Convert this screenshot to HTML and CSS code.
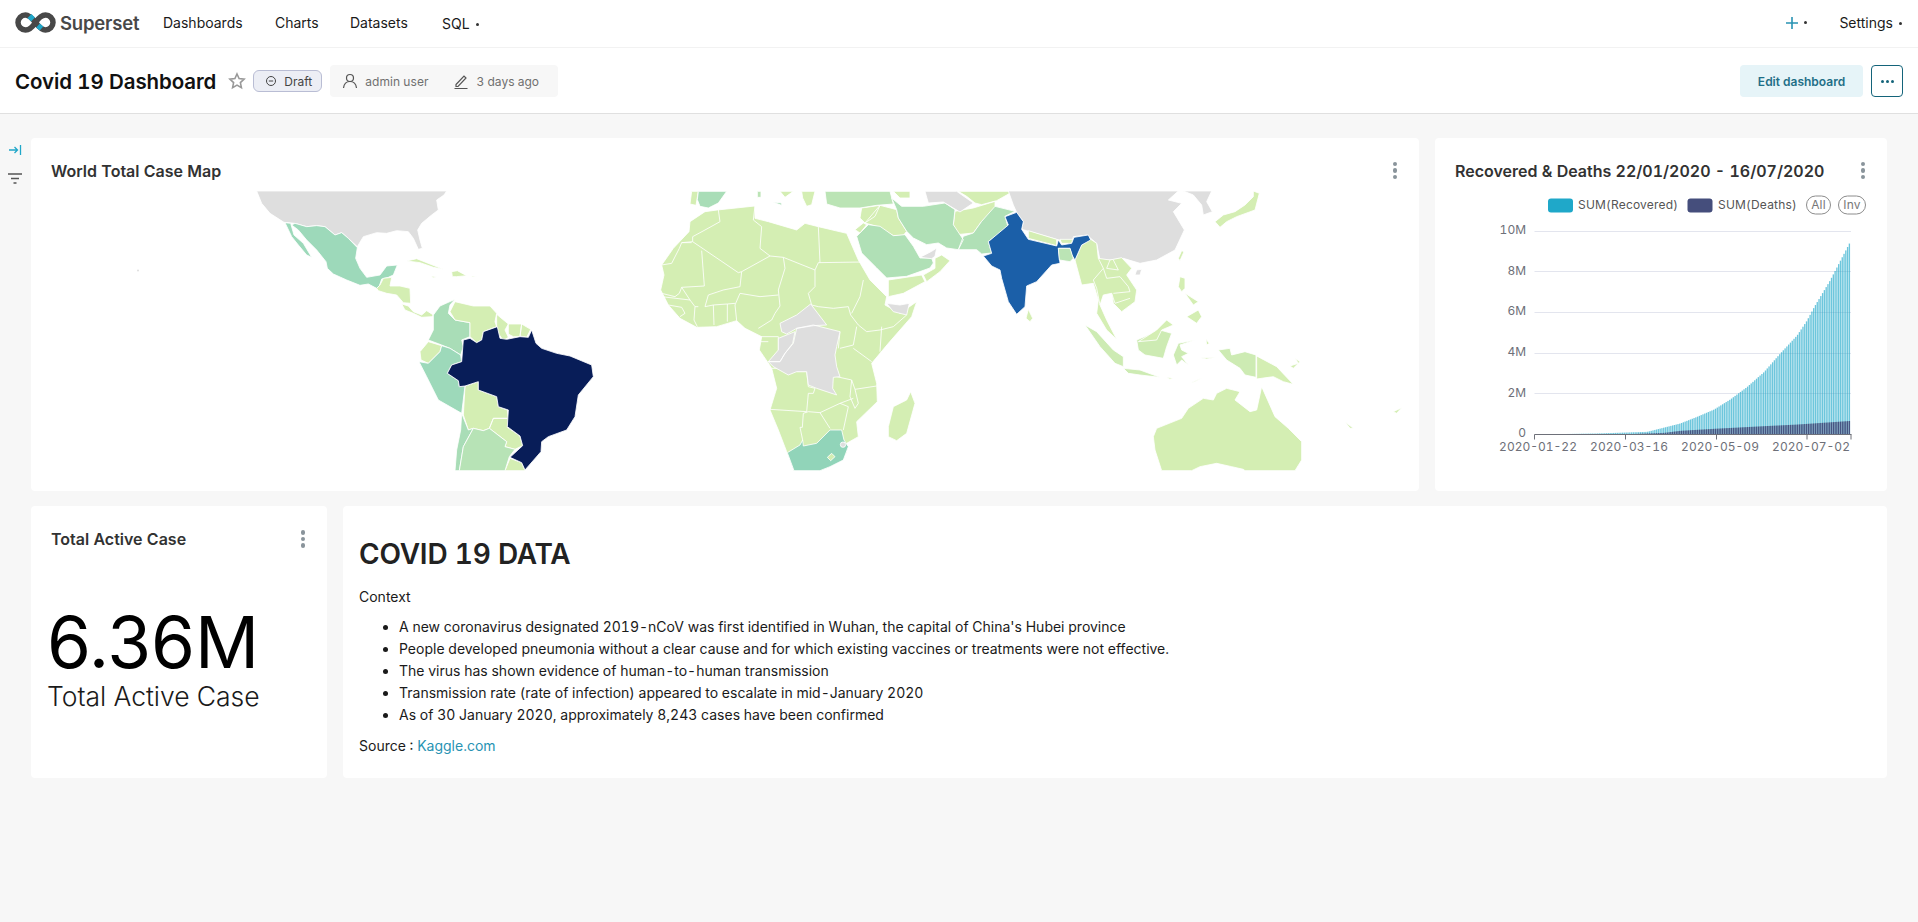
FILE: index.html
```html
<!DOCTYPE html>
<html lang="en">
<head>
<meta charset="utf-8">
<title>Covid 19 Dashboard</title>
<link rel="stylesheet" href="styles.css">
</head>
<body>
<nav class="nav">
  <div class="brand">
    <svg class="logo" viewBox="0 0 41 21" width="41" height="21">
      <path class="logo-grey" d="M20.500 10.500C17 6 14 3 10.500 3a7.500 7.500 0 0 0 0 15c3.500 0 7-3 10-7.500s6.500-7.500 10-7.500a7.500 7.500 0 0 1 0 15c-3.500 0-6.500-3-10-7.500"/>
      <path class="logo-blue" d="M14.500 4L18 7.500M23 13.500L26.500 16.500"/>
    </svg>
    <span class="brand-name">Superset</span>
  </div>
  <ul class="menu">
    <li class="m-dash">Dashboards</li>
    <li class="m-charts">Charts</li>
    <li class="m-data">Datasets</li>
    <li class="m-sql">SQL<i class="caret"></i></li>
  </ul>
  <div class="nav-right">
    <span class="plus"><svg viewBox="0 0 14 14" width="14" height="14"><path d="M7 1v12M1 7h12"/></svg><i class="caret"></i></span>
    <span class="settings">Settings<i class="caret"></i></span>
  </div>
</nav>
<header class="subhead">
  <h1 class="dash-title">Covid 19 Dashboard</h1>
  <svg class="star" viewBox="0 0 18 18" width="18" height="18"><path d="M9 2l2.100 4.600 5 .6-3.700 3.400 1 5L9 13.100 4.600 15.600l1-5L1.900 7.200l5-.6z"/></svg>
  <span class="tag"><svg viewBox="0 0 12 12" width="12" height="12"><circle cx="6" cy="6" r="4.500"/><path d="M3.800 6h4.400"/></svg>Draft</span>
  <div class="meta">
    <svg class="meta-user" viewBox="0 0 16 16" width="16" height="16"><circle cx="8" cy="5" r="3.500"/><path d="M1.500 15c.5-4 3-6.500 6.500-6.500s6 2.500 6.500 6.500"/></svg>
    <span class="meta-name">admin user</span>
    <svg class="meta-edit" viewBox="0 0 16 16" width="16" height="16"><path d="M3 11.500L11 3l2 2-8 8.500H3zM1.500 15.500h13"/></svg>
    <span class="meta-time">3 days ago</span>
  </div>
  <div class="actions">
    <button class="edit-btn">Edit dashboard</button>
    <button class="more-btn"><i></i><i></i><i></i></button>
  </div>
</header>
<div class="page">
  <aside class="rail">
    <svg class="rail-expand" viewBox="0 0 14 14" width="14" height="14"><path d="M1 7h8M6.500 4l3 3-3 3M12.500 2v10"/></svg>
    <svg class="rail-filter" viewBox="0 0 14 12" width="14" height="12"><path d="M0 1h14M3 5.500h8M5.500 10h3"/></svg>
  </aside>
  <main class="grid">
    <div class="row row-top">
      <section class="card card-map">
        <div class="card-head"><h2>World Total Case Map</h2><span class="kebab"><i></i><i></i><i></i></span></div>
        <svg class="map" viewBox="31 191 1388 280" width="1388" height="280">
          <circle class="grey" cx="138" cy="270.500" r="1"/>
          <g transform="translate(220 180) scale(.33333)" class="land">
            <path class="grey" d="M110 33L680 33 672 45 650 60 655 90 635 105 605 130 593 150 600 180 607 205 595 208 580 175 565 155 530 152 500 160 470 158 430 170 412 200 385 175 365 158 345 165 315 140 290 137 260 140 225 130 192 127 150 100 125 70Z"/>
            <path class="c-mex" d="M215 135L225 130 260 140 290 137 315 140 345 165 365 158 385 175 412 203 407 235 420 265 440 292 480 285 500 258 532 255 520 285 505 292 485 297 478 318 470 325 445 312 420 316 380 300 340 282 322 265 318 245 290 210 260 180 235 150ZM195 128L212 130 222 165 250 190 275 232 260 225 235 195 215 170Z"/>
            <path class="lt" d="M470 325L480 315 490 295 515 292 510 318 540 318 570 325 572 370 550 368 530 345 500 340 475 332ZM545 372L565 378 580 395 605 405 620 392 640 405 635 410 605 412 580 400 555 390ZM560 243L590 236 630 252 670 268 640 262 600 248ZM695 275L712 272 740 287 710 290 697 290ZM632 288L650 290 640 293ZM755 288L772 289 757 291Z"/>
            <path class="c-col" d="M705 358L690 375 685 400 705 420 750 428 750 470 725 480 730 500 722 525 690 505 665 495 625 480 640 450 640 405 660 378Z"/>
            <path class="lt" d="M705 365L760 378 810 378 830 400 825 425 830 440 790 455 785 480 770 488 750 470 750 428 705 420 690 395ZM830 403L865 432 855 450 865 472 850 482 835 460 830 440ZM865 432L905 432 900 470 880 470 865 462ZM905 432L932 448 920 472 900 468ZM625 485L665 497 660 515 625 550 603 540 600 515ZM735 618L775 605 775 630 830 650 835 680 862 690 865 715 820 715 808 745 790 752 760 745 745 750 730 705ZM820 715L865 715 862 742 900 768 908 797 885 808 855 800 860 785 808 745ZM870 835L905 848 915 872 855 872Z"/>
            <path class="c-mex" d="M665 497L690 505 722 525 725 545 695 555 682 580 715 602 718 620 735 618 725 700 655 660 620 590 597 545 625 550 660 515Z"/>
            <path class="c-col" d="M725 700L745 750 760 745 730 800 718 872 705 872 710 810 722 750Z"/>
            <path class="c-arg" d="M760 745L790 752 808 745 860 785 855 800 885 808 868 830 855 872 718 872 730 800Z"/>
            <path class="c-bra" d="M832 440L840 475 860 478 900 470 925 472 935 450 948 490 965 505 1010 520 1050 528 1115 555 1120 590 1075 645 1065 710 1040 750 985 770 965 785 963 815 915 870 905 848 870 832 908 797 900 768 862 740 865 690 835 680 830 650 775 630 775 605 735 618 718 620 715 602 682 580 695 555 725 545 730 480 750 475 770 488 785 480 790 455Z"/>
          </g>
          <g transform="translate(640 180) scale(.33333)" class="land">
            <path class="lt" d="M232 90L345 78 345 115 385 125 470 150 495 130 535 140 620 160 655 240 690 300 740 350 735 375 780 400 830 365 815 410 745 490 695 550 710 610 712 665 650 725 655 770 620 790 620 820 570 860 540 872 462 872 440 815 415 750 390 690 410 625 395 565 382 545 358 510 365 470 315 445 290 422 230 440 170 442 120 415 85 375 62 330 72 285 65 255 100 205 147 155 150 125 195 95Z"/>
            <path class="borders" d="M235 90L240 125 195 150 158 170 158 185 125 188 118 205 95 250 65 255M125 188L155 188M158 185L295 278 305 275 390 228 430 232 525 270 535 248 670 246M185 212L193 318 125 322 118 340 105 350 65 340M345 78L340 120 365 140 360 205 390 228M535 140L540 248M430 232L435 265 415 330 420 378 405 400 395 420 355 445M525 270L525 320 505 340 515 375 535 380 580 385 625 380 632 405 655 435 680 455 720 450 760 440 800 405M670 300L660 350 635 400M415 345L360 350 300 340 285 375 290 422M305 275L300 320 250 330 205 345 195 380 220 375 262 372 285 370M220 375L222 435M262 372L262 425M175 380L165 380 162 420 172 440M125 322L150 360 165 380M65 350L150 360M85 375L125 382 135 400 120 410M725 440L720 515M650 440L640 495 600 505M640 505L695 545M600 455L595 505M590 590L635 600 645 628 710 618M635 600L630 650 645 685 655 670 645 628M395 565L445 565 470 575 500 575 505 620 525 625 520 640 505 640 500 695 390 688M505 695L490 700 487 742 480 742 488 780M505 695L540 698 600 670 625 680 610 750M540 698L570 745M600 670L640 655M360 470L415 470 415 510M360 485L385 485"/>
            <path class="lt" d="M812 635L825 670 800 760 770 782 745 770 745 740 760 680 800 660Z"/>
            <path class="grey" d="M470 445L520 435 600 455 590 500 585 525 590 560 600 590 580 592 578 625 590 645 530 625 505 615 500 575 470 575 445 585 400 560 385 545 420 545 435 520 460 490ZM420 430L470 405 512 372 560 435 520 437 470 445 440 462 425 455ZM415 475L465 455 458 490 435 520 420 545 385 545 415 510ZM740 370L780 375 808 370 800 405 760 395Z"/>
            <path class="c-zaf" d="M442 818L480 795 488 780 490 798 530 790 570 750 605 750 612 780 625 800 610 840 570 860 540 872 462 872Z"/>
            <path class="lt" d="M562 832L575 820 585 830 572 842Z"/>
            <circle class="grey" cx="609" cy="794" r="8"/>
            <path class="lt" d="M745 300L845 285 855 305 790 340 745 350ZM850 285L885 265 885 235 905 225 930 242 900 275 860 305Z"/>
          </g>
          <g transform="translate(680 188) scale(.33333)" class="land">
            <path class="lt" d="M35 10L55 10 48 52 30 48ZM365 10L405 10 395 50 380 55 368 30ZM300 10L340 10 315 28ZM640 10L690 10 690 30 660 30ZM555 105L600 52 650 65 655 90 680 130 670 142 640 143 590 115ZM545 60L600 52 585 85 555 105 540 90ZM525 125L550 105 560 110 540 135ZM835 10L1000 10 950 38 905 50 885 45 860 25ZM825 70L880 60 945 40 945 60 905 100 880 135 830 140 820 110Z"/>
            <path class="c-col" d="M55 10L140 10 115 45 85 60 60 55 52 35ZM278 42L305 45 305 52Z"/>
            <path class="c-tur" d="M435 10L630 10 640 48 590 52 540 60 480 60 440 48ZM232 10L243 10 243 28 232 28Z"/>
            <path class="c-sau" d="M530 145L565 110 600 115 640 143 675 140 700 175 720 210 755 210 760 225 750 240 680 265 620 270 590 240 545 195ZM635 30L665 55 730 55 795 45 825 65 820 110 850 155 835 185 800 180 775 165 740 170 700 150 680 130 655 90 650 65ZM850 145L880 135 905 100 945 55 1005 70 975 85 985 120 925 160 935 195 905 198 890 185 835 185Z"/>
            <path class="grey" d="M735 10L830 10 880 45 840 72 820 60 790 42 745 45ZM720 208L755 190 770 180 765 205 755 212Z"/>
          </g>
          <g transform="translate(1000 180) scale(.33333)" class="land">
            <path class="grey" d="M25 33L535 33 505 60 545 70 520 95 553 150 525 210 470 240 420 250 370 235 330 240 300 240 290 190 272 175 262 165 220 170 215 190 170 178 80 152 65 148 70 125 50 97 40 75ZM550 33L635 33 620 65 637 95 610 105 605 75 580 45ZM410 270L425 268 420 285 405 285Z"/>
            <path class="lt" d="M85 152L170 178 170 197 85 175ZM180 178L218 178 215 190 185 190ZM225 240L245 195 272 178 290 190 295 235 330 240 365 233 395 265 380 285 410 330 405 365 365 395 340 370 335 340 310 345 300 375 320 420 350 478 320 450 290 400 295 360 280 310 245 315ZM85 388L98 415 90 425 78 415Z"/>
            <path class="borders" d="M295 235L310 265 280 300 290 325 300 375M310 265L320 295 360 290 385 320 390 335 340 340M330 240L320 265 355 270 340 240M335 340L345 370 390 355"/>
            <path class="c-ind" d="M50 97L70 125 65 148 85 178 170 198 175 180 185 195 215 190 222 172 265 165 272 180 245 195 225 240 215 225 210 205 175 205 180 250 155 255 110 305 80 318 75 380 50 403 25 365 5 295 0 270-25 258-50 228-25 220-35 185 25 135 15 110Z"/>
            <path class="c-tur" d="M175 205L210 205 220 235 210 245 178 240Z"/>
            <path class="lt2" d="M255 435L290 455 340 510 370 530 370 560 345 550 300 500ZM370 565L420 570 480 592 420 585 385 580ZM410 480L480 450 515 460 500 500 490 535 435 525 415 510ZM535 490L585 480 540 495 545 510 565 520 545 530 565 555 545 540 530 555 520 525ZM655 510L690 505 695 525 735 515 768 525 768 592 735 585 720 565 680 540Z"/>
            <path class="lt" d="M415 485L470 450 500 420 520 435 485 450 470 480ZM540 290L555 295 555 325 545 335 535 320ZM555 340L595 365 580 375ZM560 410L595 390 605 410 590 430ZM545 212L552 215 540 242 535 235ZM760 33L778 40 765 90 710 110 680 125 660 142 645 125 670 105 705 95 735 75 760 50ZM770 528L830 560 880 613 850 605 820 590 770 597ZM460 770L470 745 545 715 565 685 610 655 640 660 650 640 680 625 720 635 705 660 750 695 770 690 785 620 825 710 865 745 905 785 905 840 885 872 735 872 730 868 695 860 650 850 600 860 575 872 485 872 465 810ZM870 558L895 550 885 535 900 545 880 565ZM1035 725L1060 745 1050 745ZM1180 695L1205 683 1190 700ZM498 592L520 595 510 598ZM572 608L610 592 585 605ZM600 533L650 532 620 537ZM618 478L628 490 620 495Z"/>
          </g>
        </svg>
      </section>
      <section class="card card-chart">
        <div class="card-head"><h2>Recovered &amp; Deaths 22/01/2020 - 16/07/2020</h2><span class="kebab"><i></i><i></i><i></i></span></div>
        <svg id="bars" class="chart" viewBox="1435 191 452 280" width="452" height="280">
          <rect class="sw-a" x="1548" y="198.500" width="25" height="14" rx="3"/>
          <text class="lg" x="1578" y="208.500">SUM(Recovered)</text>
          <rect class="sw-b" x="1687.500" y="198.500" width="25" height="14" rx="3"/>
          <text class="lg" x="1718" y="208.500">SUM(Deaths)</text>
          <rect class="pill" x="1806.500" y="196" width="24" height="18" rx="9"/>
          <text class="lg pill-t" x="1818.500" y="209">All</text>
          <rect class="pill" x="1838.500" y="196" width="27" height="18" rx="9"/>
          <text class="lg pill-t" x="1852" y="209">Inv</text>
          <path class="gridline" d="M1534.500 231.500H1851M1534.500 271.500H1851M1534.500 312.500H1851M1534.500 353.500H1851M1534.500 393.500H1851"/>
          <g class="ylab">
            <text x="1526" y="234">10M</text><text x="1526" y="275">8M</text><text x="1526" y="315">6M</text><text x="1526" y="356">4M</text><text x="1526" y="397">2M</text><text x="1526" y="437">0</text>
          </g>
          <g id="series"></g>
          <path class="axis" d="M1534.500 434.500H1851.500M1534.500 434.500v5M1625.500 434.500v5M1716.500 434.500v5M1807 434.500v5M1851 434.500v5"/>
          <g class="xlab">
            <text x="1538" y="451">2020-01-22</text><text x="1629" y="451">2020-03-16</text><text x="1720" y="451">2020-05-09</text><text x="1811" y="451">2020-07-02</text>
          </g>
        </svg>
      </section>
    </div>
    <div class="row row-bottom">
      <section class="card card-num">
        <div class="card-head"><h2>Total Active Case</h2><span class="kebab"><i></i><i></i><i></i></span></div>
        <div class="big">6.36M</div>
        <div class="big-sub">Total Active Case</div>
      </section>
      <section class="card card-md">
        <h1>COVID 19 DATA</h1>
        <p>Context</p>
        <ul>
          <li>A new coronavirus designated 2019-nCoV was first identified in Wuhan, the capital of China's Hubei province</li>
          <li>People developed pneumonia without a clear cause and for which existing vaccines or treatments were not effective.</li>
          <li>The virus has shown evidence of human-to-human transmission</li>
          <li>Transmission rate (rate of infection) appeared to escalate in mid-January 2020</li>
          <li>As of 30 January 2020, approximately 8,243 cases have been confirmed</li>
        </ul>
        <p>Source : <a href="#">Kaggle.com</a></p>
      </section>
    </div>
  </main>
</div>
<script src="chart.js"></script>
</body>
</html>
```
FILE: styles.css
```css
* { box-sizing: border-box; }
html, body { margin: 0; height: 100%; }
body { background: #f7f7f7; font-family: Inter, "Liberation Sans", sans-serif; color: #1a1a1a; font-size: 14px; overflow: hidden; font-variant-numeric: tabular-nums; }

.nav { height: 48px; background: #fff; display: flex; align-items: center; padding: 0 0 2px 15px; border-bottom: 1px solid #f2f2f2; }
.brand { display: flex; align-items: center; gap: 4px; width: 148px; }
.logo { fill: none; }
.logo-grey { fill: none; stroke: #484848; stroke-width: 5.500; }
.logo-blue { fill: none; stroke: #20a7c9; stroke-width: 5.500; }
.brand-name { font-size: 18.500px; font-weight: 600; color: #484848; letter-spacing: -.2px; }
.menu { list-style: none; margin: 0; padding: 0; display: flex; }
.menu li { line-height: 20px; }
.m-dash { width: 112px; }
.m-charts { width: 75px; }
.m-data { width: 92px; }
.m-sql { position: relative; top: 1px; }
.caret { display: inline-block; width: 3px; height: 3px; border-radius: 50%; background: #333; margin-left: 6px; vertical-align: 3px; }
.nav-right { margin-left: auto; display: flex; align-items: center; padding-right: 16px; }
.plus { display: flex; align-items: center; margin-right: 32px; }
.plus svg path { fill: none; stroke: #2893b3; stroke-width: 1.600; }
.plus .caret { margin-left: 5px; vertical-align: 0; }
.settings { line-height: 20px; }

.subhead { height: 66px; background: #fff; display: flex; align-items: center; padding: 1px 15px 0; border-bottom: 1px solid #e0e0e0; }
.dash-title { margin: 2px 0 0; font-size: 20.500px; font-weight: 600; color: #111; line-height: 28px; white-space: nowrap; letter-spacing: -.1px; }
.star { margin-left: 12px; fill: none; stroke: #999; stroke-width: 1.600; }
.tag { display: flex; align-items: center; gap: 7px; margin-left: 7px; height: 22px; width: 69px; padding-left: 11px; border: 1px solid #b9bdd4; border-radius: 6px; background: #eceef5; font-size: 12px; color: #444; }
.tag svg { fill: none; stroke: #444; stroke-width: 1; }
.meta { display: flex; align-items: center; margin-left: 8px; height: 32px; width: 228px; padding-left: 12px; background: #f7f7f7; border-radius: 4px; font-size: 12px; color: #707070; }
.meta svg { fill: none; stroke: #555; stroke-width: 1.200; flex: none; }
.meta span { white-space: nowrap; }
.meta-name { margin: 0 24px 0 7px; letter-spacing: .05px; }
.meta-time { margin-left: 8px; }
.actions { margin-left: auto; display: flex; gap: 8px; }
.edit-btn { height: 32px; width: 123px; border: 0; border-radius: 4px; background: #e6f4f8; color: #1f6f87; font: 600 12px Inter, sans-serif; }
.more-btn { height: 32px; width: 32px; background: #fff; border: 1px solid #14647a; border-radius: 4px; display: flex; align-items: center; justify-content: center; gap: 2px; padding: 0; }
.more-btn i { width: 3px; height: 3px; border-radius: 50%; background: #14647a; }

.page { display: flex; padding-top: 24px; }
.rail { width: 31px; flex: none; display: flex; flex-direction: column; align-items: center; padding-top: 5px; gap: 16px; }
.rail svg { fill: none; stroke-width: 1.300; }
.rail-expand { stroke: #20a7c9; margin-left: -2px; }
.rail-filter { stroke: #555; margin-left: -1px; }
.grid { display: flex; flex-direction: column; gap: 15px; width: 1856px; }
.row { display: flex; gap: 16px; }
.card { background: #fff; border-radius: 4px; overflow: hidden; }
.row-top .card { height: 353px; }
.row-bottom .card { height: 272px; }
.card-map { width: 1388px; }
.card-chart { width: 452px; flex: none; }
.card-num { width: 296px; flex: none; }
.card-md { flex: 1; padding: 25px 16px 0 16px; }
.card-head { display: flex; justify-content: space-between; align-items: center; height: 53px; padding: 25px 22px 13px 20px; }
.card-head h2 { margin: 0; font-size: 16px; font-weight: 600; color: #323232; white-space: nowrap; }
.card-num .card-head { height: 50px; padding: 26px 22px 10px 20px; }
.kebab { display: flex; flex-direction: column; gap: 2px; }
.kebab i { width: 4.500px; height: 4.500px; border-radius: 50%; background: #8a949b; }
.map, .chart { display: block; }

.land { stroke: #fff; stroke-width: 2.500; stroke-linejoin: round; }
.grey { fill: #dedede; }
.lt { fill: #d4eeb3; }
.lt2 { fill: #cdebb3; }
.c-mex { fill: #9dd9ba; }
.c-col { fill: #a9ddb7; }
.c-arg { fill: #b7e3b6; }
.c-bra { fill: #081d58; }
.c-tur { fill: #bbe4b5; }
.c-sau { fill: #b0e0b6; }
.c-zaf { fill: #91d4b9; }
.c-ind { fill: #1b5fa8; }
.borders { fill: none; stroke: #fff; stroke-width: 2.500; }

.chart text { font-family: Inter, sans-serif; }
.lg { font-size: 12px; fill: #555; letter-spacing: .2px; }
.pill { fill: #fff; stroke: #8c8c8c; }
.pill-t { text-anchor: middle; fill: #777; }
.sw-a { fill: #1fa8c9; }
.sw-b { fill: #454e7c; }
.gridline { fill: none; stroke: #e3e5ee; }
.axis { fill: none; stroke: #6e7079; }
.ylab text { font-size: 12px; fill: #6e7079; text-anchor: end; }
.xlab text { font-size: 12px; fill: #6e7079; text-anchor: middle; }
.bar-a { fill: #1fa8c9; fill-opacity: .65; }
.bar-b { fill: #454e7c; fill-opacity: .95; }

.big { font-size: 71px; line-height: 72px; margin: 50px 0 0 16px; color: #000; white-space: nowrap; font-weight: 400; font-variant-numeric: normal; }
.big-sub { font-size: 26.500px; line-height: 32px; margin: 2px 0 0 16px; color: #1a1a1a; font-weight: 300; white-space: nowrap; }

.card-md h1 { margin: 0 0 9px; font-size: 28px; line-height: 46px; font-weight: 600; color: #222; letter-spacing: -.2px; }
.card-md p { margin: 0; line-height: 22px; }
.card-md ul { margin: 8px 0 9px; padding-left: 40px; }
.card-md li { line-height: 22px; }
.card-md a { color: #2893b3; text-decoration: none; }
```
FILE: chart.js
```js
// Daily bars for the Recovered & Deaths chart, interpolated from the series' key points.
(function () {
  var NS = 'http://www.w3.org/2000/svg';
  var group = document.getElementById('series');
  var recovered = [[0, 0], [62, .05], [112, .13], [129, .34], [145, .54], [162, .87], [179, 1.23], [195, 1.72],
    [212, 2.34], [229, 3.08], [245, 3.98], [262, 4.88], [272, 5.62], [279, 6.27], [295, 7.59], [315, 9.48]];
  var deaths = [[0, 0], [95, .02], [129, .08], [145, .18], [179, .28], [229, .41], [262, .49], [316, .67]];
  function at(points, x) {
    for (var i = 1; i < points.length; i++) {
      if (x <= points[i][0]) {
        var a = points[i - 1], b = points[i];
        return a[1] + (b[1] - a[1]) * (x - a[0]) / (b[0] - a[0]);
      }
    }
    return points[points.length - 1][1];
  }
  function bar(cls, x, value) {
    var h = value * 20.3;
    var r = document.createElementNS(NS, 'rect');
    r.setAttribute('class', cls);
    r.setAttribute('x', (1534.5 + x).toFixed(2));
    r.setAttribute('y', (434.5 - h).toFixed(2));
    r.setAttribute('width', '1.35');
    r.setAttribute('height', h.toFixed(2));
    group.appendChild(r);
  }
  var step = 316 / 177;
  for (var i = 0; i < 177; i++) {
    var x = i * step;
    bar('bar-a', x, at(recovered, x));
    bar('bar-b', x, at(deaths, x));
  }
})();
```
